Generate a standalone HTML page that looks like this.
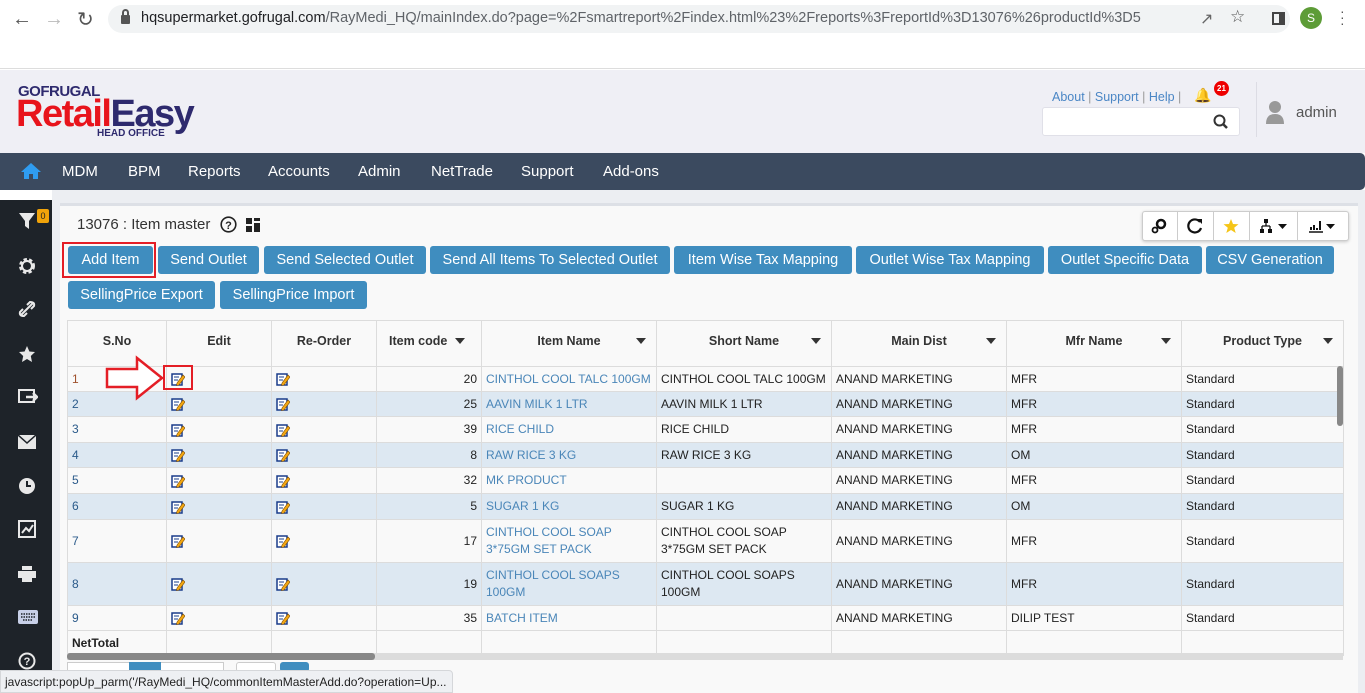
<!DOCTYPE html>
<html><head><meta charset="utf-8">
<style>
*{box-sizing:border-box;margin:0;padding:0}
body{width:1365px;height:693px;overflow:hidden;font-family:"Liberation Sans",sans-serif;background:#fff;position:relative}
.abs{position:absolute}
.nav span{position:absolute;top:10px;color:#fff;font-size:15px}
.btn{position:absolute;height:28px;background:#3f8dbf;color:#fff;font-size:14.5px;line-height:28px;text-align:center;border-radius:3px}
table{position:absolute;left:67px;top:320px;width:1276px;border-collapse:collapse;table-layout:fixed;font-size:12px;color:#222}
td,th{border:1px solid #dcdcdc;padding:0 4px;vertical-align:middle}
th{height:46px;background:#f9f9f9;font-size:12.5px;color:#333;font-weight:bold;position:relative;padding-bottom:6px}
th i{position:absolute;right:10px;top:17px;width:0;height:0;border-left:5px solid transparent;border-right:5px solid transparent;border-top:6px solid #333}
tr.o td{background:#f9f9f9}
tr.e td{background:#dde8f2}
td.l{color:#4a86b8}
td.r{text-align:right}
.sb svg{position:absolute;left:18px}
</style></head><body>
<div class="abs" style="left:0;top:0;width:1365px;height:69px;background:#fff;border-bottom:1px solid #ddd"></div>
<div class="abs" style="left:12px;top:8px;font-size:20px;color:#555">&#8592;</div>
<div class="abs" style="left:44px;top:8px;font-size:20px;color:#bbb">&#8594;</div>
<div class="abs" style="left:77px;top:7px;font-size:20px;color:#555">&#8635;</div>
<div class="abs" style="left:108px;top:5px;width:1182px;height:28px;background:#f1f3f4;border-radius:14px"></div>
<div class="abs" style="left:121px;top:15px;width:9px;height:9px;background:#555;border-radius:1px"></div>
<div class="abs" style="left:122px;top:9px;width:7px;height:8px;border:2px solid #555;border-bottom:none;border-radius:4px 4px 0 0"></div>
<div class="abs" style="left:141px;top:10px;font-size:14.5px;color:#202124">hqsupermarket.gofrugal.com<span style="color:#5f6368">/RayMedi_HQ/mainIndex.do?page=%2Fsmartreport%2Findex.html%23%2Freports%3FreportId%3D13076%26productId%3D5</span></div>
<div class="abs" style="left:1200px;top:9px;font-size:16px;color:#666">&#8599;</div>
<div class="abs" style="left:1230px;top:7px;font-size:17px;color:#555">&#9734;</div>
<div class="abs" style="left:1272px;top:12px;width:13px;height:13px;border:2px solid #444;border-right-width:6px"></div>
<div class="abs" style="left:1300px;top:7px;width:22px;height:22px;border-radius:50%;background:#5d9c37;color:#fff;font-size:12px;text-align:center;line-height:22px">S</div>
<div class="abs" style="left:1340px;top:8px;color:#555;font-size:14px;line-height:6px">·<br>·<br>·</div>
<div class="abs" style="left:0;top:70px;width:1365px;height:83px;background:#efeff5"></div>
<div class="abs" style="left:18px;top:83px;font-size:15px;font-weight:bold;color:#2e2a6e;letter-spacing:-0.5px">GOFRUGAL</div>
<div class="abs" style="left:16px;top:95px;font-size:38px;font-weight:bold;letter-spacing:-1.5px;line-height:38px"><span style="color:#e8141c">Retail</span><span style="color:#2e2a6e">Easy</span></div>
<div class="abs" style="left:97px;top:128px;font-size:10px;font-weight:bold;color:#2e2a6e">HEAD OFFICE</div>
<div class="abs" style="left:1052px;top:90px;font-size:12.5px;color:#4a86c5">About <span style="color:#999">|</span> Support <span style="color:#999">|</span> Help <span style="color:#999">|</span></div>
<div class="abs" style="left:1194px;top:87px;font-size:14px;color:#666">&#128276;</div>
<div class="abs" style="left:1214px;top:81px;width:15px;height:15px;border-radius:50%;background:#e00;color:#fff;font-size:8px;font-weight:bold;text-align:center;line-height:15px">21</div>
<div class="abs" style="left:1042px;top:107px;width:198px;height:29px;background:#fff;border:1px solid #e0e0e8;border-radius:3px"></div>
<svg class="abs" style="left:1213px;top:114px" width="16" height="16"><circle cx="6.5" cy="6.5" r="5" fill="none" stroke="#333" stroke-width="2"/><line x1="10" y1="10" x2="14" y2="14" stroke="#333" stroke-width="2.5"/></svg>
<div class="abs" style="left:1256px;top:82px;width:1px;height:55px;background:#dcdce4"></div>
<svg class="abs" style="left:1265px;top:100px" width="20" height="26"><circle cx="10" cy="7" r="6" fill="#999"/><path d="M1 24 Q1 14 10 14 Q19 14 19 24Z" fill="#999"/></svg>
<div class="abs" style="left:1296px;top:104px;font-size:15px;color:#555">admin</div>
<div class="abs nav" style="left:0;top:153px;width:1365px;height:37px;background:#3b4a5f;border-radius:0 5px 5px 0">
<svg style="position:absolute;left:20px;top:9px" width="22" height="18"><path d="M11 1 L1 10 H4 V17 H9 V12 H13 V17 H18 V10 H21Z" fill="#2f9cf0"/></svg>
<span style="left:62px">MDM</span><span style="left:128px">BPM</span><span style="left:188px">Reports</span><span style="left:268px">Accounts</span><span style="left:358px">Admin</span><span style="left:431px">NetTrade</span><span style="left:521px">Support</span><span style="left:603px">Add-ons</span>
</div>
<div class="abs sb" style="left:0;top:200px;width:52px;height:493px;background:#1e2329">
<svg style="top:12px" width="18" height="18"><path d="M1 1 H17 L11 9 V17 L7 14 V9Z" fill="#e8e8e8"/></svg>
<div style="position:absolute;left:37px;top:9px;width:12px;height:14px;background:#f0a30a;border-radius:2px;font-size:9px;color:#222;text-align:center;line-height:14px">0</div>
<svg style="top:57px" width="18" height="18"><circle cx="9" cy="9" r="6" fill="none" stroke="#e8e8e8" stroke-width="4" stroke-dasharray="3 2"/><circle cx="9" cy="9" r="5" fill="none" stroke="#e8e8e8" stroke-width="2"/></svg>
<svg style="top:100px" width="18" height="18"><path d="M3 15 L7 11 M11 7 L15 3 M5 9 L2 12 Q1 16 6 16 L9 13 M13 9 L16 6 Q17 2 12 2 L9 5 M6 12 L12 6" stroke="#e8e8e8" stroke-width="2" fill="none"/></svg>
<svg style="top:145px" width="18" height="18"><path d="M9 1 L11.4 6.5 L17 7 L12.8 11 L14 17 L9 14 L4 17 L5.2 11 L1 7 L6.6 6.5Z" fill="#e8e8e8"/></svg>
<svg style="top:188px" width="20" height="18"><rect x="1" y="2" width="15" height="12" fill="none" stroke="#e8e8e8" stroke-width="2"/><path d="M8 9 L19 9 M15 5 L19 9 L15 13" stroke="#e8e8e8" stroke-width="2.5" fill="none"/></svg>
<svg style="top:235px" width="18" height="14"><rect x="0" y="0" width="18" height="14" fill="#e8e8e8"/><path d="M0 0 L9 8 L18 0" stroke="#1e2329" stroke-width="1.5" fill="none"/></svg>
<svg style="top:277px" width="18" height="18"><circle cx="9" cy="9" r="8" fill="#e8e8e8"/><path d="M9 4 V9 H13" stroke="#1e2329" stroke-width="2" fill="none"/></svg>
<svg style="top:320px" width="18" height="18"><rect x="1" y="1" width="16" height="16" fill="none" stroke="#e8e8e8" stroke-width="2"/><path d="M4 13 L8 8 L11 11 L15 5" stroke="#e8e8e8" stroke-width="2" fill="none"/></svg>
<svg style="top:366px" width="18" height="16"><rect x="4" y="0" width="10" height="4" fill="#e8e8e8"/><rect x="0" y="5" width="18" height="7" fill="#e8e8e8"/><rect x="4" y="10" width="10" height="6" fill="#e8e8e8"/></svg>
<svg style="top:410px" width="20" height="14"><rect x="0" y="0" width="20" height="14" rx="2" fill="#c8d0e8"/><path d="M3 4 H17 M3 7 H17 M5 10 H15" stroke="#1e2329" stroke-width="1.5" stroke-dasharray="1.5 1"/></svg>
<svg style="top:452px" width="18" height="18"><circle cx="9" cy="9" r="7.5" fill="none" stroke="#e8e8e8" stroke-width="2"/><text x="9" y="13" font-size="11" font-weight="bold" fill="#e8e8e8" text-anchor="middle" font-family="Liberation Sans">?</text></svg>
</div>
<div class="abs" style="left:52px;top:190px;width:1313px;height:503px;background:#eceef2"></div>
<div class="abs" style="left:60px;top:203px;width:1298px;height:490px;background:#f9f9f9;border-top:3px solid #dde0e6"></div>
<div class="abs" style="left:77px;top:216px;font-size:15px;color:#333">13076 : Item master</div>
<svg class="abs" style="left:220px;top:216px" width="17" height="17"><circle cx="8.5" cy="8.5" r="7.3" fill="none" stroke="#222" stroke-width="1.6"/><text x="8.5" y="13" font-size="11" font-weight="bold" fill="#222" text-anchor="middle" font-family="Liberation Sans">?</text></svg>
<svg class="abs" style="left:246px;top:218px" width="14" height="14"><rect x="0" y="0" width="6" height="6" fill="#222"/><rect x="8" y="0" width="6" height="3" fill="#222"/><rect x="8" y="5" width="6" height="9" fill="#222"/><rect x="0" y="8" width="6" height="6" fill="#222"/></svg>
<div class="abs" style="left:1142px;top:211px;width:207px;height:30px;background:#fff;border:1px solid #ccc;border-radius:3px;box-shadow:0 1px 3px rgba(0,0,0,.2)"></div>
<div class="abs" style="left:1177px;top:212px;width:1px;height:28px;background:#ccc"></div>
<div class="abs" style="left:1213px;top:212px;width:1px;height:28px;background:#ccc"></div>
<div class="abs" style="left:1249px;top:212px;width:1px;height:28px;background:#ccc"></div>
<div class="abs" style="left:1297px;top:212px;width:1px;height:28px;background:#ccc"></div>
<svg class="abs" style="left:1151px;top:218px" width="16" height="16"><circle cx="10" cy="6" r="4" fill="none" stroke="#111" stroke-width="2.5"/><circle cx="4" cy="12" r="2.5" fill="none" stroke="#111" stroke-width="1.8"/></svg>
<svg class="abs" style="left:1187px;top:218px" width="16" height="16"><path d="M13 4 A6.5 6.5 0 1 0 14 10" fill="none" stroke="#111" stroke-width="2.2"/><path d="M10 1 L15 1 L15 6Z" fill="#111"/></svg>
<svg class="abs" style="left:1223px;top:218px" width="16" height="16"><path d="M8 1 L10 6 L15.5 6.3 L11.2 9.8 L12.7 15 L8 12 L3.3 15 L4.8 9.8 L0.5 6.3 L6 6Z" fill="#f5c518"/></svg>
<svg class="abs" style="left:1260px;top:218px" width="30" height="16"><rect x="4" y="1" width="4" height="4" fill="#111"/><path d="M6 5 V8 M2 8 H10 M2 8 V11 M10 8 V11" stroke="#111" stroke-width="1.3"/><rect x="0" y="11" width="4" height="4" fill="#111"/><rect x="8" y="11" width="4" height="4" fill="#111"/><path d="M18 6 H27 L22.5 11Z" fill="#111"/></svg>
<svg class="abs" style="left:1308px;top:218px" width="30" height="16"><path d="M1 14 H15" stroke="#111" stroke-width="1.5"/><path d="M3 12 V9 M6 12 V7 M9 12 V10 M12 12 V3" stroke="#111" stroke-width="2"/><path d="M18 6 H27 L22.5 11Z" fill="#111"/></svg>
<div class="btn" style="left:68px;top:246px;width:85px">Add Item</div>
<div class="abs" style="left:62px;top:242px;width:94px;height:36px;border:2px solid #e41e26"></div>
<div class="btn" style="left:158px;top:246px;width:101px">Send Outlet</div>
<div class="btn" style="left:264px;top:246px;width:162px">Send Selected Outlet</div>
<div class="btn" style="left:430px;top:246px;width:240px">Send All Items To Selected Outlet</div>
<div class="btn" style="left:674px;top:246px;width:178px">Item Wise Tax Mapping</div>
<div class="btn" style="left:856px;top:246px;width:188px">Outlet Wise Tax Mapping</div>
<div class="btn" style="left:1048px;top:246px;width:154px">Outlet Specific Data</div>
<div class="btn" style="left:1206px;top:246px;width:128px">CSV Generation</div>
<div class="btn" style="left:68px;top:281px;width:147px">SellingPrice Export</div>
<div class="btn" style="left:220px;top:281px;width:147px">SellingPrice Import</div>
<table>
<colgroup><col style="width:99px"><col style="width:105px"><col style="width:105px"><col style="width:105px"><col style="width:175px"><col style="width:175px"><col style="width:175px"><col style="width:175px"><col style="width:162px"></colgroup>
<tr><th>S.No</th><th>Edit</th><th>Re-Order</th><th style="text-align:left;padding-left:12px">Item code<i style="right:16px"></i></th><th>Item Name<i></i></th><th>Short Name<i></i></th><th>Main Dist<i></i></th><th>Mfr Name<i></i></th><th>Product Type<i></i></th></tr>
<tbody id="tb"></tbody>
</table>
<svg class="abs" style="left:104px;top:355px" width="62" height="46"><path d="M3 14 H33 V3 L58 23 L33 43 V32 H3Z" fill="#fff" stroke="#e41e26" stroke-width="2.5"/></svg>
<div class="abs" style="left:163px;top:365px;width:30px;height:25px;border:2px solid #e41e26"></div>
<div class="abs" style="left:67px;top:653px;width:1276px;height:7px;background:#dcdcdc"></div>
<div class="abs" style="left:67px;top:653px;width:308px;height:7px;background:#888;border-radius:3px"></div>
<div class="abs" style="left:1337px;top:366px;width:6px;height:60px;background:#888;border-radius:3px"></div>
<div class="abs" style="left:67px;top:662px;width:157px;height:10px;border:1px solid #ccc;background:#fff"></div>
<div class="abs" style="left:129px;top:662px;width:32px;height:10px;background:#3f8dbf"></div>
<div class="abs" style="left:236px;top:662px;width:40px;height:10px;border:1px solid #ccc;background:#fff;border-radius:3px"></div>
<div class="abs" style="left:280px;top:662px;width:29px;height:10px;background:#3f8dbf;border-radius:3px"></div>
<div class="abs" style="left:0;top:670px;width:453px;height:23px;background:#eef0f3;border:1px solid #d5d7da;border-radius:0 4px 0 0;font-size:12px;color:#222;line-height:22px;padding-left:4px">javascript:popUp_parm('/RayMedi_HQ/commonItemMasterAdd.do?operation=Up...</div>
<script>
var ic='<svg width="14" height="14" style="vertical-align:middle"><rect x="1" y="2" width="10" height="11" fill="#fff" stroke="#1a3c8a" stroke-width="1.5"/><path d="M3 5H8M3 8H7" stroke="#1a3c8a"/><path d="M6 11 L12 3 L14 5 L8 13 L5.5 13.5Z" fill="#f3a712" stroke="#7a4a00" stroke-width=".6"/></svg>';
var d=[[20,"CINTHOL COOL TALC 100GM","CINTHOL COOL TALC 100GM","MFR",0],[25,"AAVIN MILK 1 LTR","AAVIN MILK 1 LTR","MFR",0],[39,"RICE CHILD","RICE CHILD","MFR",0],[8,"RAW RICE 3 KG","RAW RICE 3 KG","OM",0],[32,"MK PRODUCT","","MFR",0],[5,"SUGAR 1 KG","SUGAR 1 KG","OM",0],[17,"CINTHOL COOL SOAP<br>3*75GM SET PACK","CINTHOL COOL SOAP<br>3*75GM SET PACK","MFR",1],[19,"CINTHOL COOL SOAPS<br>100GM","CINTHOL COOL SOAPS<br>100GM","MFR",1],[35,"BATCH ITEM","","DILIP TEST",0]];
var hs=[25,25,26,25,26,26,43,43,25],h='';
d.forEach(function(r,i){h+='<tr class="'+(i%2?'e':'o')+'" style="height:'+hs[i]+'px;line-height:17px"><td style="color:'+(i==0?'#a0522d':'#2a5a8a')+'">'+(i+1)+'</td><td>'+ic+'</td><td>'+ic+'</td><td class="r">'+r[0]+'</td><td class="l">'+r[1]+'</td><td>'+r[2]+'</td><td>ANAND MARKETING</td><td>'+r[3]+'</td><td>Standard</td></tr>';});
h+='<tr class="o" style="height:25px"><td style="font-weight:bold">NetTotal</td><td></td><td></td><td></td><td></td><td></td><td></td><td></td><td></td></tr>';
document.getElementById('tb').innerHTML=h;
</script>
</body></html>
